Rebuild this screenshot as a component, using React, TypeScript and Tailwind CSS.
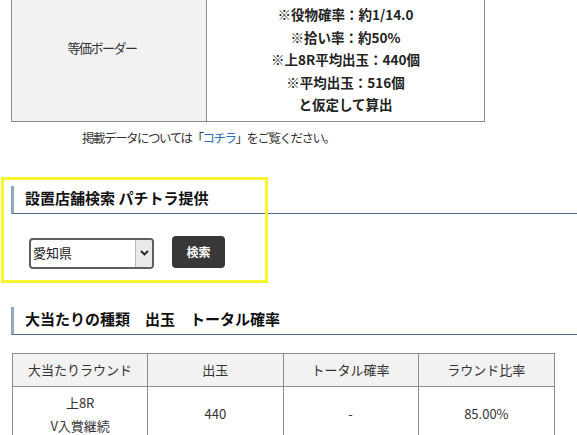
import React from 'react';

const jp = { fontFamily: '"Noto Sans CJK JP", "Noto Sans", sans-serif' };

const SectionHeading: React.FC<{ title: string }> = ({ title }) => (
  <div className="ml-[11px] border-l-[3px] border-l-[#8fa8c2] border-b border-b-[#4f6b85] pl-[11px] pb-[3px]">
    <h2 className="text-[15px] font-bold leading-[24px] text-[#111] whitespace-pre">{title}</h2>
  </div>
);

const conditions = [
  '※役物確率：約1/14.0',
  '※拾い率：約50%',
  '※上8R平均出玉：440個',
  '※平均出玉：516個',
  'と仮定して算出',
];

const rounds = ['大当たりラウンド', '出玉', 'トータル確率', 'ラウンド比率'];

export default function App() {
  return (
    <div className="relative w-[577px] h-[435px] overflow-hidden bg-white text-[#333]" style={jp}>
      {/* border table (top is scrolled off) */}
      <div className="-mt-[26px]">
        <div className="ml-[11px] w-[474px] grid grid-cols-[195px_1fr] border border-[#8c8c8c]">
          <div className="bg-[#f2f2f2] border-r border-[#8c8c8c] flex items-center justify-center pr-[14px]">
            <span className="text-[13px] tracking-[-1.5px]">等価ボーダー</span>
          </div>
          <div className="pt-[28px] pb-[5px] text-center">
            {conditions.map((line) => (
              <p key={line} className="text-[13.5px] font-bold leading-[22.5px] text-[#222]">
                {line}
              </p>
            ))}
          </div>
        </div>
        <p className="mt-[6px] pl-[82px] text-[12.5px] leading-[20px] tracking-[-1.5px]">
          掲載データについては「<a className="text-[#2a6ebb]">コチラ</a>」をご覧ください。
        </p>
      </div>

      {/* shop search */}
      <div className="mt-[38px]">
        <SectionHeading title="設置店舗検索 パチトラ提供" />
        <div className="flex items-center gap-[18px] pl-[29px] mt-[24px]">
          <div className="w-[125px] h-[31px] flex items-stretch border-2 border-[#5f5f5f] rounded-[4px] overflow-hidden bg-white">
            <span className="flex-1 flex items-center pl-[2px] text-[13px] text-[#222]">愛知県</span>
            <span className="w-[17px] flex items-center justify-center bg-[#e9e9e9] border-l border-[#b5b5b5]">
              <svg width="9" height="6" viewBox="0 0 9 6">
                <path d="M1 1l3.5 3.5L8 1" fill="none" stroke="#222" strokeWidth="1.8" />
              </svg>
            </span>
          </div>
          <button className="w-[53px] h-[32px] rounded-[4px] bg-[#383838] text-white text-[12px] font-bold -mt-[3px]">
            検索
          </button>
        </div>
      </div>

      {/* round breakdown */}
      <div className="mt-[38px]">
        <SectionHeading title="大当たりの種類　出玉　トータル確率" />
        <div className="ml-[12px] mt-[18px] w-[543px] border border-[#8c8c8c] text-[13px] text-[#333]">
          <div className="grid grid-cols-4 bg-[#f2f2f2] h-[33px] border-b border-[#8c8c8c]">
            {rounds.map((h, i) => (
              <div key={h} className={`flex items-center justify-center ${i < 3 ? 'border-r border-[#8c8c8c]' : ''}`}>
                {h}
              </div>
            ))}
          </div>
          <div className="grid grid-cols-4">
            <div className="border-r border-[#8c8c8c] py-[4px] text-center leading-[23px]">
              上8R
              <br />
              V入賞継続
            </div>
            <div className="border-r border-[#8c8c8c] flex items-center justify-center">440</div>
            <div className="border-r border-[#8c8c8c] flex items-center justify-center">-</div>
            <div className="flex items-center justify-center">85.00%</div>
          </div>
        </div>
      </div>

      {/* yellow highlight annotation */}
      <div className="absolute left-[1px] top-[177px] w-[267px] h-[106px] border-[3px] border-[#f6f62c] pointer-events-none" />
    </div>
  );
}
